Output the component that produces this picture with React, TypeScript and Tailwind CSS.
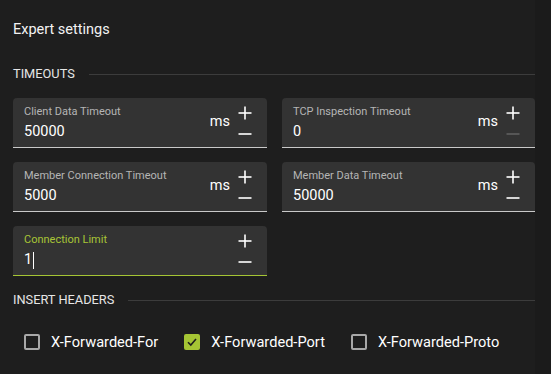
import React from "react";

const Plus = ({ color = "#ffffff" }: { color?: string }) => (
  <svg width="14" height="14" viewBox="0 0 14 14" className="block">
    <line x1="0.5" y1="7" x2="13.5" y2="7" stroke={color} strokeWidth="1.6" />
    <line x1="7" y1="0.5" x2="7" y2="13.5" stroke={color} strokeWidth="1.6" />
  </svg>
);

const Minus = ({ color = "#ffffff" }: { color?: string }) => (
  <svg width="14" height="4" viewBox="0 0 14 4" className="block">
    <line x1="0.5" y1="2" x2="13.5" y2="2" stroke={color} strokeWidth="1.6" />
  </svg>
);

type FieldProps = {
  label: string;
  value: string;
  unit?: string;
  active?: boolean;
  minusDisabled?: boolean;
};

const Field = ({ label, value, unit, active, minusDisabled }: FieldProps) => (
  <div
    className={`h-[50px] rounded-t-[4px] bg-[#333333] border-b flex items-stretch pl-[11px] pr-[15px] ${
      active ? "border-[#a5c534]" : "border-[#c9c9c9]"
    }`}
  >
    <div className="flex-1 flex flex-col pt-[7px]">
      <div
        className={`text-[11px] leading-[14px] ${active ? "text-[#a8c536]" : "text-[#b5b5b5]"}`}
      >
        {label}
      </div>
      <div className="mt-[4px] text-[14.5px] leading-[18px] text-white flex items-center">
        <span>{value}</span>
        {active && <span className="ml-[1px] inline-block w-[1px] h-[17px] bg-white" />}
      </div>
    </div>
    {unit && (
      <div className="flex items-center text-[14.5px] text-white pb-[1px] mr-[8px]">{unit}</div>
    )}
    <div className="flex flex-col items-center w-[14px] pt-[8px]">
      <Plus />
      <div className="mt-[12px]">
        <Minus color={minusDisabled ? "#5f5f5f" : "#ffffff"} />
      </div>
    </div>
  </div>
);

const SectionHeading = ({ title }: { title: string }) => (
  <div className="flex items-center h-[16px]">
    <span className="text-[12.8px] leading-[16px] text-[#e6e6e6]">{title}</span>
    <div className="flex-1 ml-[14px] h-[1px] bg-[#3c3c3c]" />
  </div>
);

const Checkbox = ({ label, checked }: { label: string; checked?: boolean }) => (
  <div className="flex items-center">
    {checked ? (
      <div className="w-[16px] h-[16px] rounded-[2px] bg-[#a5c534] flex items-center justify-center">
        <svg width="12" height="12" viewBox="0 0 12 12">
          <path d="M2 6.2 L4.8 9 L10 3" fill="none" stroke="#1e1e1e" strokeWidth="1.6" />
        </svg>
      </div>
    ) : (
      <div className="w-[16px] h-[16px] rounded-[2px] border-2 border-[#a8a8a8]" />
    )}
    <span className="ml-[11px] text-[14.6px] leading-[18px] text-white">{label}</span>
  </div>
);

export default function App() {
  return (
    <div
      className="w-[551px] h-[374px] bg-[#1b1b1b] flex overflow-hidden"
      style={{ fontFamily: "Roboto, 'Noto Sans', sans-serif" }}
    >
      <div className="w-[535px] h-full bg-[#1e1e1e] pl-[13px]">
        <div className="pt-[21px] text-[14.5px] leading-[18px] text-[#f2f2f2]">Expert settings</div>
        <div className="mt-[27px]">
          <SectionHeading title="TIMEOUTS" />
        </div>
        <div className="mt-[16px] grid grid-cols-[254px_253px] gap-x-[15px] gap-y-[14px]">
          <Field label="Client Data Timeout" value="50000" unit="ms" />
          <Field label="TCP Inspection Timeout" value="0" unit="ms" minusDisabled />
          <Field label="Member Connection Timeout" value="5000" unit="ms" />
          <Field label="Member Data Timeout" value="50000" unit="ms" />
          <Field label="Connection Limit" value="1" active />
        </div>
        <div className="mt-[16px]">
          <SectionHeading title="INSERT HEADERS" />
        </div>
        <div className="mt-[25px] pl-[11px] flex items-center gap-[26px]">
          <Checkbox label="X-Forwarded-For" />
          <Checkbox label="X-Forwarded-Port" checked />
          <Checkbox label="X-Forwarded-Proto" />
        </div>
      </div>
    </div>
  );
}
